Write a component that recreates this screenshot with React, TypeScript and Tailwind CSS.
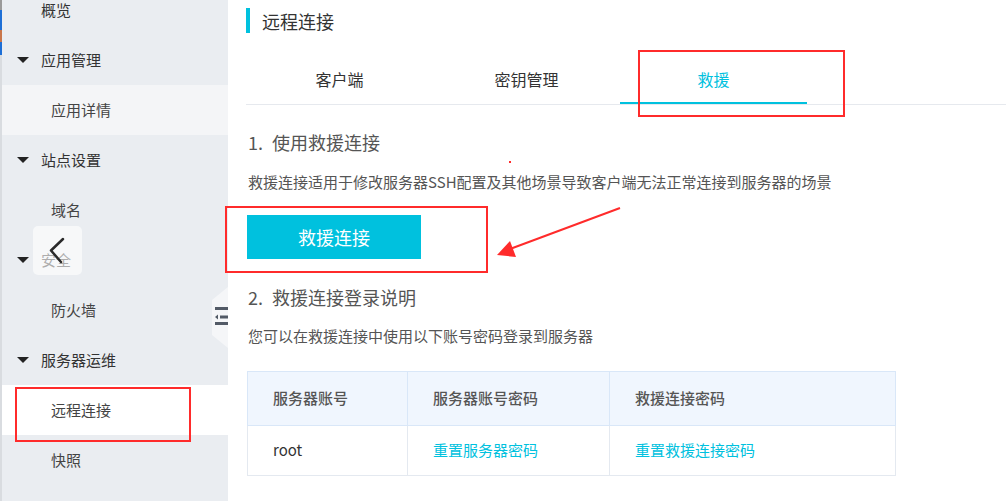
import React from "react";

type Item = { t: string; top: boolean; arrow?: boolean; bg?: string };

const items: Item[] = [
  { t: "概览", top: true, arrow: false },
  { t: "应用管理", top: true, arrow: true },
  { t: "应用详情", top: false, bg: "bg-[#f4f5f7]" },
  { t: "站点设置", top: true, arrow: true },
  { t: "域名", top: false },
  { t: "安全", top: true, arrow: true },
  { t: "防火墙", top: false },
  { t: "服务器运维", top: true, arrow: true },
  { t: "远程连接", top: false, bg: "bg-white" },
  { t: "快照", top: false },
];

function Sidebar() {
  return (
    <div className="relative w-[226px] shrink-0 h-full bg-[#eaedf1]">
      <div className="-mt-[15px] flex flex-col">
        {items.map((it) => (
          <div
            key={it.t}
            className={`relative h-[50px] flex items-center text-[15px] text-[#333] ${it.bg ?? ""}`}
          >
            {it.top ? (
              <>
                {it.arrow && (
                  <span className="absolute left-[15px] top-[22px] w-0 h-0 border-l-[6px] border-r-[6px] border-t-[6px] border-l-transparent border-r-transparent border-t-[#222]" />
                )}
                <span className="pl-[39px]">{it.t}</span>
              </>
            ) : (
              <span className="pl-[49px] text-[#444]">{it.t}</span>
            )}
          </div>
        ))}
      </div>
      {/* collapse toggle */}
      <div className="absolute left-[210px] top-[287px] w-[16px] h-[61px]">
        <svg width="16" height="61" viewBox="0 0 16 61" className="absolute inset-0">
          <polygon points="16,0 0,13 0,48 16,61" fill="#f5f6f8" />
          <rect x="3" y="20" width="13" height="3" fill="#525a66" />
          <polygon points="3,30 6,27.5 6,32.5" fill="#525a66" />
          <rect x="8" y="28.5" width="8" height="3" fill="#525a66" />
          <rect x="3" y="35" width="13" height="3" fill="#525a66" />
        </svg>
      </div>
      {/* back overlay button */}
      <div className="absolute left-[31px] top-[226px] w-[49px] h-[49px] rounded-[5px] bg-white/60 flex items-center justify-center">
        <svg width="49" height="49" viewBox="0 0 49 49" className="absolute inset-0">
          <polyline points="30,13 18,24.5 28,36" fill="none" stroke="#2a2a2a" strokeWidth="2.5" strokeLinecap="round" strokeLinejoin="round" />
        </svg>
      </div>
    </div>
  );
}

function Main() {
  return (
    <div className="flex-1 h-full pl-[18px] pt-[8px] text-[#333]">
      <div className="flex items-center h-[25px]">
        <div className="w-[4px] h-[25px] bg-[#00c1de]" />
        <span className="ml-[12px] text-[18px] text-[#333] leading-none">远程连接</span>
      </div>
      <div className="mt-[21px] flex border-b border-[#e6e9ee]">
        <div className="w-[187px] h-[50px] flex items-center justify-center text-[16px] text-[#333]">客户端</div>
        <div className="w-[187px] h-[50px] flex items-center justify-center text-[16px] text-[#333]">密钥管理</div>
        <div className="w-[187px] h-[50px] -mb-px flex items-center justify-center text-[16px] text-[#00c1de] border-b-2 border-[#00c1de] pt-[1px]">救援</div>
      </div>
      <div className="mt-[25px] h-[24px] flex items-center text-[18px] text-[#555] pl-[2px]">
        <span>1.</span>
        <span className="ml-[9px]">使用救援连接</span>
      </div>
      <div className="mt-[18px] h-[20px] flex items-center text-[15px] text-[#555] pl-[2px]">
        救援连接适用于修改服务器SSH配置及其他场景导致客户端无法正常连接到服务器的场景
      </div>
      <button className="mt-[23px] ml-[1px] w-[174px] h-[44px] bg-[#00c1de] text-white text-[18px] flex items-center justify-center">
        救援连接
      </button>
      <div className="mt-[26px] h-[24px] flex items-center text-[18px] text-[#555] pl-[2px]">
        <span>2.</span>
        <span className="ml-[9px]">救援连接登录说明</span>
      </div>
      <div className="mt-[17px] h-[20px] flex items-center text-[15px] text-[#555] pl-[2px]">
        您可以在救援连接中使用以下账号密码登录到服务器
      </div>
      <table className="mt-[25px] ml-[1px] border-collapse text-[15px]">
        <thead>
          <tr className="h-[54px] bg-[#f0f6fe]">
            <th className="w-[160px] border border-[#d9e7f8] text-left font-medium text-[#555] pl-[25px]">服务器账号</th>
            <th className="w-[202px] border border-[#d9e7f8] text-left font-medium text-[#555] pl-[25px]">服务器账号密码</th>
            <th className="w-[286px] border border-[#d9e7f8] text-left font-medium text-[#555] pl-[25px]">救援连接密码</th>
          </tr>
        </thead>
        <tbody>
          <tr className="h-[50px]">
            <td className="border border-[#e4e9f0] pl-[25px] text-[#333]">root</td>
            <td className="border border-[#e4e9f0] pl-[25px] text-[#00c1de]">重置服务器密码</td>
            <td className="border border-[#e4e9f0] pl-[25px] text-[#00c1de]">重置救援连接密码</td>
          </tr>
        </tbody>
      </table>
    </div>
  );
}

export default function App() {
  return (
    <div
      className="relative w-[1006px] h-[501px] overflow-hidden flex bg-white"
      style={{ fontFamily: '"Noto Sans CJK SC", "Noto Sans", sans-serif' }}
    >
      <div className="w-[2px] shrink-0 h-full flex flex-col">
        <div className="h-[10px] bg-[#9a9a9a]" />
        <div className="h-[20px] bg-[#1e6fd6]" />
        <div className="h-[12px] bg-[#c9764a]" />
        <div className="h-[13px] bg-[#1e6fd6]" />
        <div className="flex-1 bg-[#d9dce0]" />
      </div>
      <Sidebar />
      <Main />

      {/* red annotations */}
      <div className="absolute left-[15px] top-[387px] w-[176px] h-[55px] border-2 border-[#ff2b2b]" />
      <div className="absolute left-[638px] top-[50px] w-[207px] h-[67px] border-2 border-[#ff2b2b]" />
      <div className="absolute left-[225px] top-[206px] w-[263px] h-[67px] border-2 border-[#ff2b2b]" />
      <div className="absolute left-[509px] top-[161px] w-[2px] h-[2px] bg-[#ff2b2b]" />
      <svg className="absolute left-0 top-0" width="1006" height="501" viewBox="0 0 1006 501" style={{ pointerEvents: "none" }}>
        <line x1="620" y1="208" x2="510" y2="249" stroke="#ff2b2b" strokeWidth="2" />
        <polygon points="497,255 510,241 516,257" fill="#ff2b2b" />
      </svg>
    </div>
  );
}
